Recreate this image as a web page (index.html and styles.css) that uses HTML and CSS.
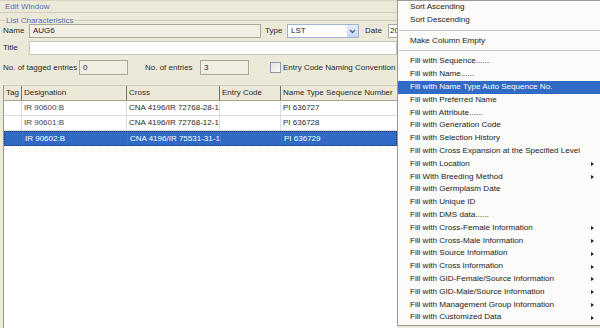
FILE: index.html
```html
<!DOCTYPE html>
<html>
<head>
<meta charset="utf-8">
<link rel="stylesheet" href="styles.css">
</head>
<body>
<div class="app">
  <div class="editwin">
    <div class="wintitle">Edit Window</div>
    <div class="group">
      <div class="legend">List Characteristics</div>
      <div class="row r1">
        <span class="lbl w-name">Name</span>
        <div class="field f-name">AUG6</div>
        <span class="lbl w-type">Type</span>
        <div class="combo">
          <span class="combo-text">LST</span>
          <span class="combo-btn"><svg width="7" height="5" viewBox="0 0 7 5"><path d="M1 1 L3.5 3.5 L6 1" fill="none" stroke="#4d6185" stroke-width="1.4"/></svg></span>
        </div>
        <span class="lbl w-date">Date</span>
        <div class="field f-date">20</div>
      </div>
      <div class="row r2">
        <span class="lbl w-name">Title</span>
        <div class="field f-title"></div>
      </div>
      <div class="row r3">
        <span class="lbl w-tagged">No. of tagged entries</span>
        <div class="field f-small">0</div>
        <span class="lbl w-entries">No. of entries</span>
        <div class="field f-small">3</div>
        <span class="check"></span>
        <span class="lbl check-lbl">Entry Code Naming Convention</span>
      </div>
      <div class="table">
        <div class="trow head">
          <div class="c">Tag</div>
          <div class="c">Designation</div>
          <div class="c">Cross</div>
          <div class="c">Entry Code</div>
          <div class="c">Name Type Sequence Number</div>
        </div>
        <div class="trow">
          <div class="c"></div>
          <div class="c desig">IR 90600:B</div>
          <div class="c">CNA 4196/IR 72768-28-1-</div>
          <div class="c"></div>
          <div class="c">PI 636727</div>
        </div>
        <div class="trow">
          <div class="c"></div>
          <div class="c desig">IR 90601:B</div>
          <div class="c">CNA 4196/IR 72768-12-1-</div>
          <div class="c"></div>
          <div class="c">PI 636728</div>
        </div>
        <div class="trow sel">
          <div class="c"></div>
          <div class="c desig">IR 90602:B</div>
          <div class="c">CNA 4196/IR 75531-31-1-</div>
          <div class="c"></div>
          <div class="c">PI 636729</div>
        </div>
      </div>
    </div>
  </div>

  <div class="menu">
    <div class="mi">Sort Ascending</div>
    <div class="mi">Sort Descending</div>
    <div class="sep"></div>
    <div class="mi">Make Column Empty</div>
    <div class="sep"></div>
    <div class="mi">Fill with Sequence......</div>
    <div class="mi">Fill with Name......</div>
    <div class="mi hi">Fill with Name Type Auto Sequence No.</div>
    <div class="mi">Fill with Preferred Name</div>
    <div class="mi">Fill with Attribute......</div>
    <div class="mi">Fill with Generation Code</div>
    <div class="mi">Fill with Selection History</div>
    <div class="mi">Fill with Cross Expansion at the Specified Level</div>
    <div class="mi sub">Fill with Location</div>
    <div class="mi sub">Fill With Breeding Method</div>
    <div class="mi">Fill with Germplasm Date</div>
    <div class="mi">Fill with Unique ID</div>
    <div class="mi">Fill with DMS data......</div>
    <div class="mi sub">Fill with Cross-Female Information</div>
    <div class="mi sub">Fill with Cross-Male Information</div>
    <div class="mi sub">Fill with Source Information</div>
    <div class="mi sub">Fill with Cross Information</div>
    <div class="mi sub">Fill with GID-Female/Source Information</div>
    <div class="mi sub">Fill with GID-Male/Source Information</div>
    <div class="mi sub">Fill with Management Group Information</div>
    <div class="mi sub">Fill with Customized Data</div>
  </div>
</div>
</body>
</html>
```
FILE: styles.css
```css
html, body {
  margin: 0;
  padding: 0;
}
body {
  background: #ece9d8;
}
.app {
  position: relative;
  width: 600px;
  height: 328px;
  overflow: hidden;
  background: #ece9d8;
  font-family: "Liberation Sans", Arial, sans-serif;
  font-size: 8px;
  color: #222;
}
.editwin {
  width: 397px;
}
.wintitle {
  box-sizing: border-box;
  height: 13px;
  line-height: 11px;
  padding-left: 5px;
  color: #5a6bc0;
  border-top: 1px solid #d6d3c2;
  border-bottom: 1px solid #d0cdbb;
}
.group {
  margin-top: 7px;
  border-top: 1px solid #cfccba;
}
.legend {
  width: fit-content;
  margin-left: 5px;
  margin-top: -6px;
  padding: 0 1px;
  height: 11px;
  line-height: 11px;
  color: #5a6bc0;
  background: #ece9d8;
}
.row {
  display: flex;
  align-items: center;
  height: 14px;
  padding-left: 3px;
}
.row > * { flex-shrink: 0; }
.r1 { margin-top: -2px; }
.r2 { margin-top: 3px; }
.r3 { margin-top: 5px; height: 15px; }
.lbl {
  white-space: nowrap;
  line-height: 14px;
  color: #2a2a2a;
}
.w-name { width: 26px; }
.w-type { width: 22px; margin-left: 4px; }
.w-date { width: 23px; margin-left: 6px; }
.w-tagged { width: 76px; }
.w-entries { width: 55px; margin-left: 17px; }
.field {
  box-sizing: border-box;
  height: 100%;
  border: 1px solid #a9a89c;
  background: #f1efe4;
  padding-left: 3px;
  line-height: 12px;
  white-space: nowrap;
  overflow: hidden;
}
.f-name { width: 232px; }
.f-date { width: 30px; background: #fff; padding-left: 1px; }
.f-title { width: 368px; background: #fff; border-color: #c4c3bb; }
.f-small { width: 49px; line-height: 13px; }
.combo {
  box-sizing: border-box;
  width: 72px;
  height: 100%;
  border: 1px solid #9eb3cf;
  background: #fff;
  display: flex;
}
.combo-text {
  flex: 1;
  padding-left: 3px;
  line-height: 12px;
}
.combo-btn {
  width: 11px;
  background: linear-gradient(#e6edfb, #c7d6f3);
  display: flex;
  align-items: center;
  justify-content: center;
}
.check {
  box-sizing: border-box;
  width: 11px;
  height: 11px;
  margin-left: 21px;
  border: 1px solid #8b9bb0;
  background: linear-gradient(135deg, #e2e1d8, #fbfbf8);
}
.check-lbl {
  margin-left: 2px;
}
.table {
  margin: 10px 0 0 3px;
  width: 394px;
  height: 245px;
  background: #fff;
  border-left: 1px solid #9a998f;
  box-sizing: border-box;
}
.trow {
  display: grid;
  grid-template-columns: 18px 105px 93px 61px 117px;
  height: 15px;
  border-bottom: 1px solid #dcdcd6;
  box-sizing: border-box;
}
.trow .c {
  padding-left: 2px;
  line-height: 14px;
  white-space: nowrap;
  overflow: hidden;
  border-right: 1px solid #dcdcd6;
  color: #2a2a2a;
}
.trow .c.desig { color: #4d3b57; }
.trow.head {
  height: 16px;
  background: #ece9d8;
  border-bottom: 1px solid #a6a393;
  border-top: 1px solid #d4d0c0;
}
.trow.head .c {
  border-right: 1px solid #76746a;
  line-height: 14px;
  color: #2a2a2a;
}
.trow.sel {
  background: #316ac5;
  border: 1px dotted #1c3c70;
}
.trow.sel .c {
  color: #fff;
  border-right-color: #3d74cb;
  line-height: 13px;
}

.menu {
  position: absolute;
  left: 397px;
  top: 0;
  width: 210px;
  height: 326px;
  box-sizing: border-box;
  border: 1px solid #9a9a9a;
  background: #fbfbfa;
  font-family: "Liberation Sans", Arial, sans-serif;
  font-size: 8.1px;
  color: #222;
}
.mi {
  position: relative;
  height: 12.8px;
  line-height: 12.8px;
  padding-left: 12px;
  white-space: nowrap;
}
.mi.hi {
  background: #316ac5;
  color: #fff;
}
.mi.sub::after {
  content: "";
  position: absolute;
  left: 193px;
  top: 4.4px;
  border-left: 3px solid #222;
  border-top: 2px solid transparent;
  border-bottom: 2px solid transparent;
}
.sep {
  box-sizing: border-box;
  height: 8px;
  padding-top: 3px;
}
.sep::before {
  content: "";
  display: block;
  margin-left: 1px;
  height: 1px;
  background: #c5c5c5;
  border-bottom: 1px solid #fff;
}
```
